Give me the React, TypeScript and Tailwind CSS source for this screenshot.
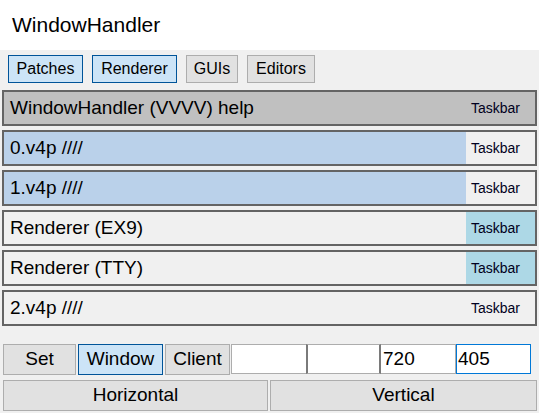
import React from "react";

const font = { fontFamily: '"Liberation Sans", Arial, sans-serif' };

function Tab({ label, active }: { label: string; active?: boolean }) {
  return (
    <div
      className={
        "h-[28px] flex items-center justify-center text-[16px] text-black border " +
        (active ? "bg-[#cce4f7] border-[#005499]" : "bg-[#e1e1e1] border-[#adadad]")
      }
    >
      {label}
    </div>
  );
}

function Row({
  label,
  fill,
  taskbarBlue,
  header,
}: {
  label: string;
  fill?: boolean;
  taskbarBlue?: boolean;
  header?: boolean;
}) {
  return (
    <div
      className={
        "h-[36px] flex border-2 border-[#646464] " +
        (header ? "bg-[#c0c0c0]" : "bg-[#f0f0f0]")
      }
    >
      <div
        className={
          "flex-1 flex items-center pl-[6px] text-[19px] text-black " +
          (fill ? "bg-[#bad1ea]" : "")
        }
      >
        {label}
      </div>
      <div
        className={
          "w-[69px] flex items-center pl-[5px] text-[14px] text-[#000020] " +
          (taskbarBlue ? "bg-[#add8e6]" : "")
        }
      >
        Taskbar
      </div>
    </div>
  );
}

export default function App() {
  return (
    <div className="w-[539px] h-[413px] bg-[#f0f0f0] overflow-hidden" style={font}>
      <div className="h-[50px] bg-white flex items-center pl-[12px] text-[21px] text-black">
        WindowHandler
      </div>
      <div className="flex pt-[5px] pl-[8px] gap-[9px]">
        <div className="w-[75px]">
          <Tab label="Patches" active />
        </div>
        <div className="w-[85px]">
          <Tab label="Renderer" active />
        </div>
        <div className="w-[52px]">
          <Tab label="GUIs" />
        </div>
        <div className="w-[68px]">
          <Tab label="Editors" />
        </div>
      </div>
      <div className="flex flex-col gap-[4px] pl-[2px] w-[537px] mt-[7px]">
        <Row label="WindowHandler (VVVV) help" header />
        <Row label="0.v4p ////" fill />
        <Row label="1.v4p ////" fill />
        <Row label="Renderer (EX9)" taskbarBlue />
        <Row label="Renderer (TTY)" taskbarBlue />
        <Row label="2.v4p ////" />
      </div>
      <div className="flex mt-[18px] pl-[3px] items-start">
        <div className="w-[73px] h-[31px] flex items-center justify-center bg-[#e1e1e1] border border-[#adadad] text-[19px] text-black">
          Set
        </div>
        <div className="ml-[2px] w-[85px] h-[31px] flex items-center justify-center bg-[#cce4f7] border border-[#005499] text-[19px] text-black">
          Window
        </div>
        <div className="ml-[2px] w-[65px] h-[31px] flex items-center justify-center bg-[#e1e1e1] border border-[#adadad] text-[19px] text-black">
          Client
        </div>
        <div className="ml-[1px] flex h-[30px]">
          <div className="w-[75px] bg-white border border-[#adadad] border-r-0"></div>
          <div className="w-[75px] bg-white border-2 border-[#7a7a7a] border-t-[1px] border-b-[1px] border-t-[#adadad] border-b-[#adadad]"></div>
          <div className="w-[75px] bg-white border border-[#adadad] border-l-0 flex items-center pl-[2px] text-[19px] text-black">
            720
          </div>
          <div className="w-[75px] bg-white border border-[#0078d7] flex items-center pl-[1px] text-[19px] text-black">
            405
          </div>
        </div>
      </div>
      <div className="flex gap-[2px] pl-[3px] mt-[5px]">
        <div className="w-[265px] h-[31px] flex items-center justify-center bg-[#e1e1e1] border border-[#adadad] text-[19px] text-black">
          Horizontal
        </div>
        <div className="w-[267px] h-[31px] flex items-center justify-center bg-[#e1e1e1] border border-[#adadad] text-[19px] text-black">
          Vertical
        </div>
      </div>
    </div>
  );
}
